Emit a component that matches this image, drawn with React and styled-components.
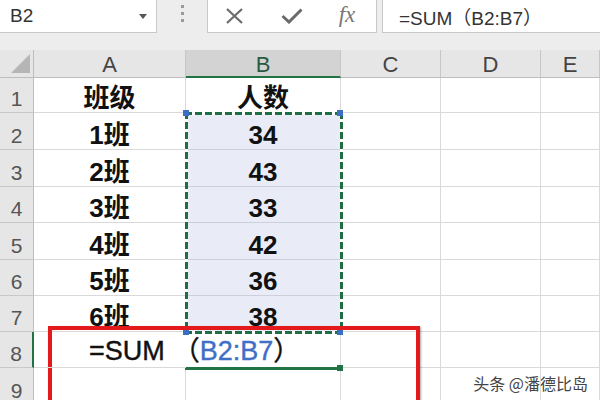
import React from 'react';
import styled, { createGlobalStyle } from 'styled-components';

const GlobalStyle = createGlobalStyle`
  html, body { margin: 0; padding: 0; background: #fff; }
  body { font-family: "Liberation Sans", "Noto Sans CJK SC", sans-serif; }
  #root { width: 600px; height: 400px; overflow: hidden; }
`;

const Window = styled.div`
  position: relative;
  width: 600px;
  height: 400px;
  overflow: hidden;
  background: #fff;
  font-family: "Liberation Sans", "Noto Sans CJK SC", sans-serif;
`;

const FormulaBar = styled.div`
  height: 50px;
  background: #ededed;
  display: flex;
  align-items: flex-start;
`;

const NameBox = styled.div`
  box-sizing: border-box;
  width: 157px;
  height: 33px;
  background: #fff;
  border-right: 1px solid #c8c8c8;
  border-bottom: 1px solid #c8c8c8;
  display: flex;
  align-items: center;
  justify-content: space-between;
  padding: 0 9px 0 10px;
  font-size: 19px;
  color: #333;
`;

const Caret = styled.span`
  width: 0;
  height: 0;
  border-left: 4px solid transparent;
  border-right: 4px solid transparent;
  border-top: 5px solid #555;
  margin-top: 1px;
`;

const Grip = styled.div`
  width: 50px;
  display: flex;
  flex-direction: column;
  align-items: center;
  gap: 4px;
  padding-top: 5px;
`;

const Dot = styled.span`
  width: 3px;
  height: 3px;
  background: #9b9b9b;
`;

const ButtonBox = styled.div`
  box-sizing: border-box;
  width: 170px;
  height: 33px;
  background: #fff;
  border-left: 1px solid #c8c8c8;
  border-right: 1px solid #c8c8c8;
  border-bottom: 1px solid #c8c8c8;
  display: grid;
  grid-template-columns: 52px 64px 46px;
  align-items: center;
  justify-items: center;
`;

const Fx = styled.span`
  font-family: "Liberation Serif", serif;
  font-style: italic;
  font-size: 23px;
  color: #777;
  margin-top: -2px;
`;

const FormulaInput = styled.div`
  box-sizing: border-box;
  flex: 1;
  margin-left: 5px;
  height: 33px;
  background: #fff;
  border-left: 1px solid #c8c8c8;
  border-bottom: 1px solid #c8c8c8;
  display: flex;
  align-items: center;
  padding-left: 16px;
  font-size: 19px;
  color: #333;
  white-space: nowrap;
`;

const Sheet = styled.div`
  display: grid;
  grid-template-columns: 34px 152px 155px 100px 100px 59px;
  grid-template-rows: 28px 35px 37px 37px 36px 37px 36px 36px 36px 37px;
`;

const Corner = styled.div`
  box-sizing: border-box;
  background: #e6e6e6;
  border-right: 1px solid #bdbdbd;
  border-bottom: 1px solid #bdbdbd;
  display: flex;
  justify-content: flex-end;
  align-items: flex-end;
  padding: 0 3px 4px 0;
`;

const Triangle = styled.span`
  width: 19px;
  height: 19px;
  background: #b5b5b5;
  clip-path: polygon(100% 0, 100% 100%, 0 100%);
`;

const ColHeader = styled.div`
  box-sizing: border-box;
  background: ${(p) => (p.$active ? '#d3d3d3' : '#e6e6e6')};
  border-right: 1px solid #c6c6c6;
  border-bottom: ${(p) => (p.$active ? '2px solid #217346' : '1px solid #bdbdbd')};
  display: flex;
  justify-content: center;
  align-items: flex-end;
  padding-bottom: ${(p) => (p.$active ? '0' : '1px')};
  font-size: 22px;
  line-height: 22px;
  color: ${(p) => (p.$active ? '#2a5a42' : '#444')};
`;

const RowHeader = styled.div`
  box-sizing: border-box;
  background: #e6e6e6;
  border-right: ${(p) => (p.$active ? '2px solid #217346' : '1px solid #bdbdbd')};
  border-bottom: 1px solid #c8c8c8;
  display: flex;
  justify-content: center;
  align-items: flex-end;
  padding-bottom: 3px;
  font-size: 21px;
  line-height: 21px;
  color: #555;
`;

const Cell = styled.div`
  box-sizing: border-box;
  background: ${(p) => (p.$selected ? '#e9ecf6' : 'transparent')};
  border-right: ${(p) => (p.$noRight ? 'none' : `1px solid ${p.$selected ? '#cdd0da' : '#d9d9d9'}`)};
  border-bottom: 1px solid ${(p) => (p.$selected ? '#cdd0da' : '#d9d9d9')};
  display: flex;
  justify-content: center;
  align-items: flex-end;
  padding-bottom: 1px;
  font-size: 26px;
  line-height: 26px;
  font-weight: bold;
  color: #111;
  white-space: nowrap;
`;

const EditCell = styled(Cell)`
  justify-content: flex-start;
  padding-left: 55px;
  padding-bottom: 3px;
  font-weight: normal;
  font-size: 27px;
  overflow: visible;
  position: relative;
  z-index: 1;
  -webkit-text-stroke: 0.4px #111;
`;

const Args = styled.span`
  margin-left: 8px;
`;

const RefText = styled.span`
  color: #3f6fc6;
  -webkit-text-stroke: 0.4px #3f6fc6;
`;

const Marquee = styled.div`
  position: absolute;
  left: 185px;
  top: 112px;
  width: 158px;
  height: 222px;
  pointer-events: none;
  background:
    repeating-linear-gradient(90deg, #1f6e43 0 7px, #fff 7px 10px) top / 100% 3px no-repeat,
    repeating-linear-gradient(90deg, #1f6e43 0 7px, #fff 7px 10px) bottom / 100% 3px no-repeat,
    repeating-linear-gradient(180deg, #1f6e43 0 7px, #fff 7px 10px) left / 3px 100% no-repeat,
    repeating-linear-gradient(180deg, #1f6e43 0 7px, #fff 7px 10px) right / 3px 100% no-repeat;
`;

const Handle = styled.span`
  position: absolute;
  width: 6px;
  height: 6px;
  background: ${(p) => p.$color || '#3c6fc4'};
`;

const EditLine = styled.div`
  position: absolute;
  left: 185px;
  top: 367px;
  width: 153px;
  height: 3px;
  background: #217346;
`;

const RedFrame = styled.div`
  position: absolute;
  left: 48px;
  top: 326px;
  width: 372px;
  height: 110px;
  box-sizing: border-box;
  border: 4px solid #e3191c;
  box-shadow: 1px 1px 2px rgba(0, 0, 0, 0.35);
  pointer-events: none;
`;

const Watermark = styled.div`
  position: absolute;
  right: 12px;
  top: 371px;
  font-family: "Noto Sans CJK SC", sans-serif;
  font-size: 16px;
  color: #444;
  white-space: nowrap;
  text-shadow: 0 0 2px #fff, 0 0 2px #fff, 0 0 3px #fff;
`;

const CloseIcon = () => (
  <svg width="19" height="16" viewBox="0 0 19 16">
    <path d="M2 1 L17 15 M17 1 L2 15" stroke="#6b6b6b" strokeWidth="2.2" fill="none" />
  </svg>
);

const CheckIcon = () => (
  <svg width="22" height="16" viewBox="0 0 22 16">
    <path d="M1.5 8 L8 14 L20.5 1.5" stroke="#6b6b6b" strokeWidth="3" fill="none" strokeLinejoin="miter" />
  </svg>
);

const rows = [
  ['班级', '人数'],
  ['1班', '34'],
  ['2班', '43'],
  ['3班', '33'],
  ['4班', '42'],
  ['5班', '36'],
  ['6班', '38'],
];

const cols = ['A', 'B', 'C', 'D', 'E'];

export default function App() {
  return (
    <Window>
      <GlobalStyle />
      <FormulaBar>
        <NameBox>
          <span>B2</span>
          <Caret />
        </NameBox>
        <Grip>
          <Dot />
          <Dot />
          <Dot />
        </Grip>
        <ButtonBox>
          <CloseIcon />
          <CheckIcon />
          <Fx>fx</Fx>
        </ButtonBox>
        <FormulaInput>=SUM（B2:B7）</FormulaInput>
      </FormulaBar>
      <Sheet>
        <Corner>
          <Triangle />
        </Corner>
        {cols.map((c) => (
          <ColHeader key={c} $active={c === 'B'}>
            {c}
          </ColHeader>
        ))}
        {rows.map((r, i) => (
          <React.Fragment key={i}>
            <RowHeader>{i + 1}</RowHeader>
            <Cell>{r[0]}</Cell>
            <Cell $selected={i > 0}>{r[1]}</Cell>
            <Cell />
            <Cell />
            <Cell />
          </React.Fragment>
        ))}
        <RowHeader $active>8</RowHeader>
        <EditCell $noRight>
          =SUM<Args>（<RefText>B2:B7</RefText>）</Args>
        </EditCell>
        <Cell />
        <Cell />
        <Cell />
        <Cell />
        <RowHeader>9</RowHeader>
        <Cell />
        <Cell />
        <Cell />
        <Cell />
        <Cell />
      </Sheet>
      <Marquee />
      <Handle style={{ left: 183, top: 110 }} />
      <Handle style={{ left: 337, top: 110 }} />
      <Handle style={{ left: 183, top: 329 }} />
      <Handle style={{ left: 337, top: 329 }} />
      <EditLine />
      <Handle $color="#217346" style={{ left: 337, top: 365 }} />
      <RedFrame />
      <Watermark>头条 @潘德比岛</Watermark>
    </Window>
  );
}
